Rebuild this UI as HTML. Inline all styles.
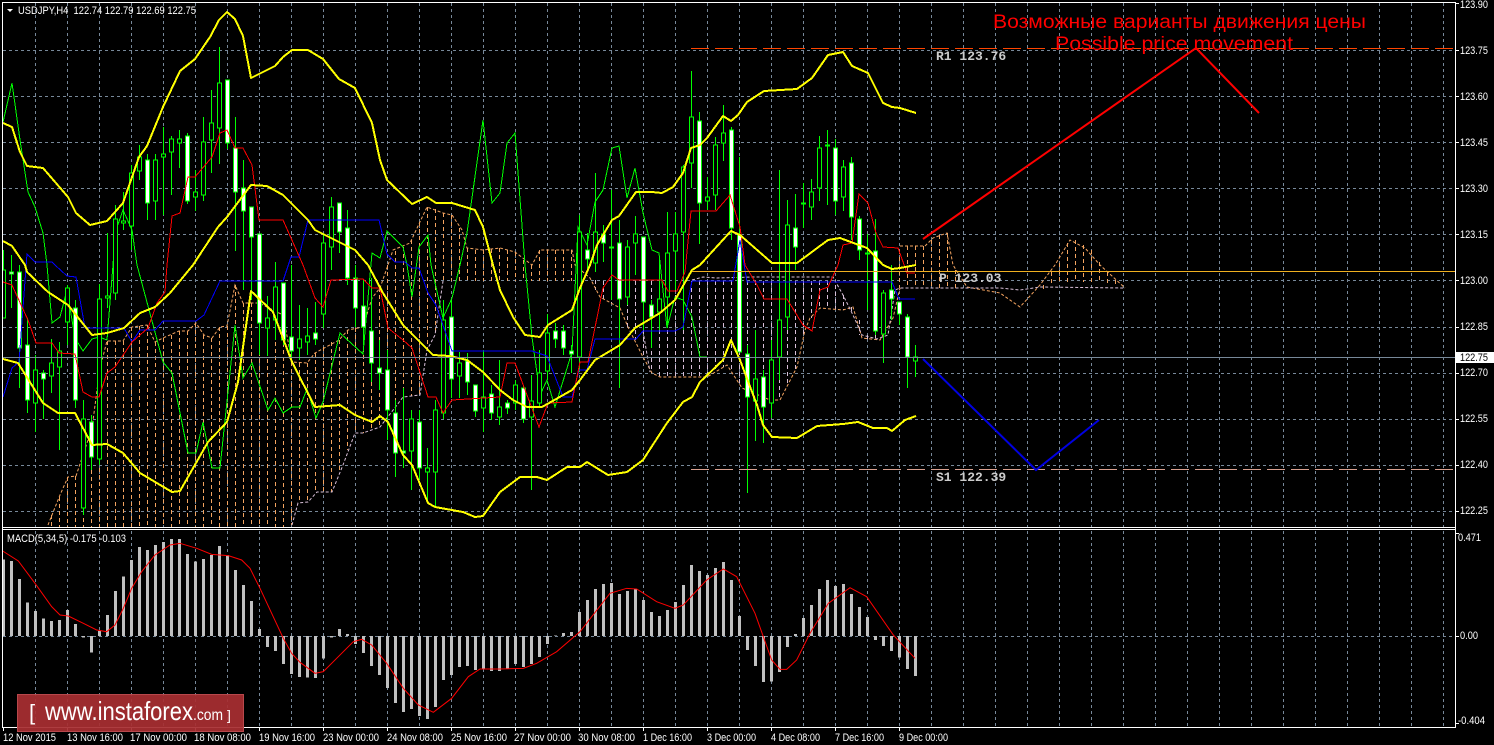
<!DOCTYPE html>
<html lang="en">
<head>
<meta charset="utf-8">
<title>USDJPY,H4</title>
<style>
html,body{margin:0;padding:0;background:#000;width:1494px;height:745px;overflow:hidden}
svg{display:block}
text{font-family:"Liberation Sans",sans-serif}
.ax{fill:#fff;font-size:11px}
.mono{font-family:"Liberation Mono",monospace;font-size:13px;font-weight:bold;fill:#ccc}
</style>
</head>
<body>
<svg width="1494" height="745" viewBox="0 0 1494 745" xmlns="http://www.w3.org/2000/svg">
<rect width="1494" height="745" fill="#000"/>
<defs><clipPath id="m"><rect x="3" y="3" width="1452" height="524"/></clipPath></defs>

<!-- grid -->
<g shape-rendering="crispEdges" fill="none" stroke="#778899" stroke-width="1" stroke-dasharray="3 3">
<path d="M3 50.5H1455M3 96.5H1455M3 142.5H1455M3 188.5H1455M3 234.5H1455M3 280.5H1455M3 327.5H1455M3 373.5H1455M3 419.5H1455M3 465.5H1455M3 511.5H1455M3 636.5H1455"/>
<path d="M35.5 3V727M67.5 3V727M99.5 3V727M131.5 3V727M163.5 3V727M195.5 3V727M227.5 3V727M259.5 3V727M291.5 3V727M323.5 3V727M355.5 3V727M387.5 3V727M419.5 3V727M451.5 3V727M483.5 3V727M515.5 3V727M547.5 3V727M579.5 3V727M611.5 3V727M643.5 3V727M675.5 3V727M707.5 3V727M739.5 3V727M771.5 3V727M803.5 3V727M835.5 3V727M867.5 3V727M899.5 3V727M931.5 3V727M963.5 3V727M995.5 3V727M1027.5 3V727M1059.5 3V727M1091.5 3V727M1123.5 3V727M1155.5 3V727M1187.5 3V727M1219.5 3V727M1251.5 3V727M1283.5 3V727M1315.5 3V727M1347.5 3V727M1379.5 3V727M1411.5 3V727M1443.5 3V727"/>
</g>

<g clip-path="url(#m)">
<!-- ichimoku cloud hatch -->
<g fill="none" stroke-width="1" stroke-dasharray="4 3" shape-rendering="crispEdges">
<path stroke="#f4a460" d="M51.5 515V527M59.5 497V527M67.5 477V527M75.5 476V527M83.5 455V527M91.5 428V527M99.5 370V527M107.5 341V527M115.5 341V527M123.5 341V527M131.5 327V527M139.5 326V527M147.5 325V527M155.5 342V527M163.5 338V527M171.5 335V527M179.5 331V527M187.5 331V527M195.5 323V527M203.5 335V527M211.5 338V527M219.5 327V527M227.5 326V527M235.5 285V527M243.5 303V527M251.5 303V527M259.5 303V527M267.5 310V527M275.5 314V527M283.5 315V527M291.5 362V525M299.5 363V503M307.5 363V502M315.5 353V492M323.5 347V492M331.5 342V492M339.5 340V470M347.5 330V450M355.5 328V433M363.5 327V433M371.5 298V430M379.5 288V427M387.5 265V415M395.5 251V408M403.5 247V397M411.5 240V396M419.5 222V395M427.5 207V350M435.5 209V335M443.5 213V281M451.5 215V281M459.5 228V281M467.5 248V281M475.5 250V281M483.5 250V281M491.5 249V281M499.5 248V281M507.5 250V281M515.5 252V281M523.5 260V281M531.5 265V281M539.5 250V281M547.5 250V281M555.5 250V281M563.5 250V281M571.5 250V281M579.5 265V281"/>
<path stroke="#d8bfd8" d="M595.5 280V290M603.5 281V300M611.5 281V303M619.5 281V308M627.5 281V327M635.5 281V340M643.5 281V357M651.5 281V373M659.5 281V377M667.5 281V377M675.5 281V377M683.5 281V377M691.5 281V377M699.5 281V377M707.5 281V377M715.5 281V372M723.5 281V367M731.5 281V372M739.5 281V385M747.5 281V390M755.5 281V395M763.5 281V400M771.5 281V400M779.5 281V400M787.5 281V385M795.5 281V370M803.5 281V335M811.5 281V318M819.5 281V308M827.5 281V308M835.5 285V309M843.5 295V310M851.5 307V314M859.5 320V335M867.5 335V339M875.5 320V340M883.5 320V340M891.5 305V320"/>
<path stroke="#f4a460" d="M899.5 250V288M907.5 246V288M915.5 246V288M923.5 246V288M931.5 240V288M939.5 235V288M947.5 233V288M955.5 270V288M1043.5 285V290M1051.5 272V285M1059.5 263V282M1067.5 243V282M1075.5 240V282M1083.5 245V282M1091.5 250V283M1099.5 262V283M1107.5 272V284M1115.5 280V286"/>
</g>
<!-- cloud outlines -->
<polyline fill="none" stroke="#f4a460" stroke-dasharray="3 2" points="48,525 60,495 68,477 76,476 83,455 92,428 100,368 107,341 123,341 132,327 147,325 155,342 163,338 179,331 188,331 196,323 204,335 212,338 220,327 227,326 235,285 243,303 259,303 283,315 292,362 307,363 315,353 339,340 348,330 363,327 372,298 380,288 388,265 393,250 410,243 427,207 443,213 452,215 462,230 467,248 483,250 500,248 515,252 532,265 540,250 572,250 575,265 590,278 600,297 620,308 628,327 643,357 652,373 660,377 707,377 727,365 742,388 770,400 780,400 797,367 805,330 810,318 820,308 843,310 853,307 862,338 880,340 893,318 900,288"/>
<polyline fill="none" stroke="#f4a460" stroke-dasharray="3 2" points="900,246 925,246 933,238 947,233 953,265 967,287 1000,293 1020,307 1040,285 1055,265 1070,240 1085,248 1100,265 1125,288"/>
<polyline fill="none" stroke="#d8bfd8" stroke-dasharray="3 2" points="292,525 298,503 308,502 317,492 332,492 343,465 355,433 363,433 380,427 397,405 403,397 420,395 427,350 435,335 443,281"/>
<polyline fill="none" stroke="#d8bfd8" stroke-dasharray="3 2" points="643,331 650,372"/>
<polyline fill="none" stroke="#d8bfd8" stroke-dasharray="3 2" points="692,280 703,277 717,278 753,277 820,277 833,277 843,295 853,315 862,335 877,339 888,335 895,290 900,288 1000,288 1020,290 1040,287 1125,288"/>

<!-- chikou green -->
<polyline fill="none" stroke="#00ff00" shape-rendering="crispEdges" points="3,122 12,83 20,140 28,192 35,207 43,233 47,265 52,323 60,317 67,290 75,338 83,351 92,339 99,337 107,340 113,265 115,233 123,210 132,230 137,265 163,362 172,373 188,453 196,453 203,422 212,468 220,468 235,325 243,378 252,363 268,410 275,398 283,413 292,407 300,407 307,389 316,418 323,402 340,333 363,354 372,253 380,258 387,231 403,247 407,265 412,297 419,247 428,235 431,265 443,318 452,298 460,265 467,233 483,120 492,203 500,193 507,143 515,133 525,265 532,337 540,395 547,380 555,407 572,352 578,227 587,245 595,202 603,190 612,148 619,146 627,198 635,168 643,213 652,250 659,253 667,328 675,297 683,300 692,317 700,357 707,357"/>

<!-- wicks -->
<path fill="none" stroke="#00ff00" shape-rendering="crispEdges" d="M3.5 250V318M11.5 255V308M19.5 265V388M27.5 318V413M35.5 355V432M43.5 370V419M51.5 339V393M59.5 342V450M67.5 285V345M75.5 300V408M83.5 400V515M91.5 415V470M99.5 284V465M107.5 233V308M115.5 205V300M123.5 192V230M131.5 165V250M139.5 145V180M147.5 154V220M155.5 154V220M163.5 127V215M171.5 136V195M179.5 130V168M187.5 133V204M195.5 170V211M203.5 117V201M211.5 90V173M219.5 47V164M227.5 80V149M235.5 117V251M243.5 160V290M251.5 207V300M259.5 234V355M267.5 296V356M275.5 262V340M283.5 283V345M291.5 265V362M299.5 305V360M307.5 308V355M315.5 302V345M323.5 233V328M331.5 197V270M339.5 203V253M347.5 210V285M355.5 265V327M363.5 280V345M371.5 278V382M379.5 340V390M387.5 350V440M395.5 400V477M403.5 388V468M411.5 410V490M419.5 410V480M427.5 448V502M435.5 400V507M443.5 300V419M451.5 300V398M459.5 352V398M467.5 353V395M475.5 385V417M483.5 350V432M491.5 385V420M499.5 360V425M507.5 400V414M515.5 380V410M523.5 386V423M531.5 375V490M539.5 350V408M547.5 314V380M555.5 323V348M563.5 325V355M571.5 345V373M579.5 215V372M587.5 233V270M595.5 173V272M603.5 225V262M611.5 190V300M619.5 220V388M627.5 240V305M635.5 216V275M643.5 237V330M651.5 300V348M659.5 260V330M667.5 212V328M675.5 212V290M683.5 165V330M691.5 71V188M699.5 112V244M707.5 177V210M715.5 137V210M723.5 105V161M731.5 127V240M739.5 157V300M747.5 345V493M755.5 330V441M763.5 370V443M771.5 340V418M779.5 170V380M787.5 200V330M795.5 194V270M803.5 183V228M811.5 179V220M819.5 136V201M827.5 130V205M835.5 139V215M843.5 160V211M851.5 157V240M859.5 216V260M867.5 234V310M875.5 219V335M883.5 290V363M891.5 265V320M899.5 302V325M907.5 314V388M915.5 345V377"/>

<!-- bull bodies -->
<path fill="#000" stroke="#00ff00" shape-rendering="crispEdges" d="M1.5 270h4V318h-4zM33.5 370h4V403h-4zM49.5 363h4V376h-4zM57.5 351h4V367h-4zM65.5 288h4V322h-4zM81.5 419h4V508h-4zM97.5 299h4V459h-4zM105.5 296h4V298h-4zM113.5 219h4V293h-4zM121.5 221h4V223h-4zM129.5 173h4V226h-4zM137.5 157h4V171h-4zM153.5 160h4V201h-4zM161.5 154h4V157h-4zM169.5 139h4V152h-4zM177.5 139h4V143h-4zM193.5 192h4V197h-4zM201.5 142h4V195h-4zM209.5 123h4V140h-4zM217.5 83h4V128h-4zM265.5 318h4V328h-4zM273.5 287h4V320h-4zM297.5 339h4V348h-4zM305.5 336h4V342h-4zM321.5 243h4V314h-4zM329.5 207h4V247h-4zM409.5 419h4V451h-4zM425.5 468h4V472h-4zM433.5 410h4V472h-4zM441.5 320h4V413h-4zM457.5 363h4V376h-4zM481.5 397h4V408h-4zM497.5 407h4V417h-4zM513.5 385h4V403h-4zM529.5 401h4V417h-4zM537.5 373h4V403h-4zM545.5 333h4V371h-4zM577.5 232h4V357h-4zM593.5 232h4V263h-4zM609.5 247h4V248h-4zM625.5 247h4V297h-4zM633.5 234h4V243h-4zM657.5 299h4V312h-4zM665.5 253h4V297h-4zM673.5 234h4V251h-4zM681.5 167h4V232h-4zM689.5 117h4V163h-4zM705.5 197h4V201h-4zM713.5 145h4V195h-4zM721.5 133h4V143h-4zM753.5 379h4V401h-4zM769.5 360h4V403h-4zM777.5 320h4V357h-4zM785.5 225h4V317h-4zM801.5 203h4V204h-4zM809.5 192h4V207h-4zM817.5 148h4V188h-4zM825.5 145h4V146h-4zM841.5 167h4V197h-4zM865.5 253h4V254h-4zM881.5 293h4V334h-4zM913.5 357h4V361h-4z"/>
<!-- bear bodies -->
<path fill="#fff" stroke="#00ff00" shape-rendering="crispEdges" d="M9.5 272h4V274h-4zM17.5 272h4V348h-4zM25.5 345h4V400h-4zM41.5 373h4V379h-4zM73.5 308h4V400h-4zM89.5 422h4V457h-4zM145.5 160h4V203h-4zM185.5 136h4V201h-4zM225.5 80h4V143h-4zM233.5 148h4V192h-4zM241.5 188h4V211h-4zM249.5 207h4V237h-4zM257.5 234h4V323h-4zM281.5 283h4V340h-4zM289.5 337h4V351h-4zM313.5 333h4V339h-4zM337.5 203h4V232h-4zM345.5 228h4V278h-4zM353.5 278h4V308h-4zM361.5 306h4V327h-4zM369.5 331h4V363h-4zM377.5 368h4V373h-4zM385.5 370h4V410h-4zM393.5 413h4V453h-4zM401.5 451h4V453h-4zM417.5 422h4V468h-4zM449.5 317h4V379h-4zM465.5 361h4V382h-4zM473.5 385h4V411h-4zM489.5 394h4V413h-4zM505.5 403h4V408h-4zM521.5 388h4V419h-4zM553.5 331h4V339h-4zM561.5 331h4V348h-4zM569.5 351h4V354h-4zM585.5 250h4V259h-4zM601.5 234h4V243h-4zM617.5 243h4V299h-4zM641.5 237h4V302h-4zM649.5 305h4V317h-4zM697.5 121h4V203h-4zM729.5 130h4V228h-4zM737.5 235h4V352h-4zM745.5 354h4V397h-4zM761.5 377h4V407h-4zM793.5 228h4V247h-4zM833.5 148h4V201h-4zM849.5 163h4V217h-4zM857.5 219h4V250h-4zM873.5 251h4V331h-4zM889.5 290h4V299h-4zM897.5 302h4V314h-4zM905.5 317h4V357h-4z"/>

<!-- blue -->
<polyline fill="none" stroke="#0000ff" shape-rendering="crispEdges" points="3,397 12,368 19,362 27,254 35,262 52,262 55,265 67,276 76,277 85,328 124,328 132,342 140,330 155,330 163,321 196,321 204,315 220,281 283,281 291,257 299,257 308,220 379,220 387,254 395,262 405,262 412,268 419,268 428,293 436,305 452,351 532,351 547,356 563,397 572,397 579,370 587,370 595,339 636,339 643,331 675,331 683,327 692,281 733,281 740,240 747,282 892,282 899,299 915,299"/>
<!-- red tenkan -->
<polyline fill="none" stroke="#ff0000" shape-rendering="crispEdges" points="3,282 12,285 22,307 28,320 36,343 52,343 59,353 75,354 83,392 92,397 99,397 107,373 115,367 132,342 148,328 157,303 165,292 167,265 172,216 180,213 188,177 195,177 212,157 220,133 227,130 235,148 243,148 252,165 259,220 283,220 303,265 315,298 323,307 331,280 363,279 372,288 380,288 388,328 403,340 412,348 428,397 436,397 443,413 452,400 500,397 507,363 515,363 539,427 548,403 572,402 580,362 588,362 603,288 612,275 619,280 662,280 668,291 677,291 685,272 691,211 716,211 730,195 740,227 745,265 757,285 764,299 787,299 803,325 812,331 820,290 828,287 838,265 843,245 852,243 859,194 868,203 876,233 883,247 898,248 907,273 915,273"/>
<!-- bollinger yellow -->
<g fill="none" stroke="#ffff00" stroke-width="2" shape-rendering="crispEdges" stroke-linejoin="round">
<polyline points="3,123 12,127 20,152 27,166 43,168 68,197 76,213 90,225 107,221 123,203 139,157 147,146 163,107 180,71 195,59 210,37 219,20 227,12 235,19 243,36 251,78 275,66 283,57 292,50 308,50 323,59 339,79 355,88 372,123 380,160 387,180 412,204 427,197 436,203 452,203 475,210 483,227 493,265 500,290 513,317 525,335 540,337 548,325 572,310 580,288 590,265 597,245 612,220 619,216 636,192 652,192 662,193 673,187 683,173 691,148 700,145 707,138 723,116 731,121 738,115 747,102 764,91 797,89 812,78 828,55 843,52 852,66 868,73 883,103 892,107 900,108 916,113"/>
<polyline points="3,241 12,246 25,265 27,272 48,292 68,305 92,335 107,333 124,328 140,313 155,307 170,293 193,265 218,227 227,217 251,185 267,186 283,195 308,220 315,230 345,245 355,250 368,265 383,293 403,325 433,355 450,356 467,360 483,372 500,390 513,400 527,407 542,407 572,390 580,380 595,360 620,345 635,328 660,313 675,300 692,270 700,265 731,231 740,235 772,263 797,263 828,240 840,238 867,248 883,265 892,269 900,268 916,265"/>
<polyline points="3,359 18,363 43,403 58,413 75,413 92,445 107,444 123,453 140,473 172,492 180,491 208,442 227,422 238,382 251,291 273,312 292,362 315,407 340,405 355,415 372,422 380,416 388,422 403,455 412,465 428,503 435,507 463,512 475,517 483,516 500,492 520,477 537,477 547,480 567,467 580,467 587,462 608,475 627,472 643,460 667,423 683,402 692,397 700,382 723,360 731,340 740,360 757,405 763,425 772,437 797,438 817,426 843,424 858,422 873,428 887,428 892,431 905,420 916,416"/>
</g>

<!-- pivots & price -->
<g shape-rendering="crispEdges" fill="none">
<path stroke="#778899" d="M3 357.5H1455"/>
<path stroke="#f0b020" d="M692 271.5H1455"/>
<path stroke="#ff4500" stroke-dasharray="18 6" d="M691 48.5H1455"/>
<path stroke="#d8a090" stroke-dasharray="18 6" d="M691 469.5H1455"/>
</g>

<!-- drawn forecast lines -->
<polyline fill="none" stroke="#ff0000" stroke-width="2" points="923,239 1196,48 1259,113"/>
<polyline fill="none" stroke="#0000e0" stroke-width="2" points="923,359 1036,470 1099,420"/>
</g>

<!-- macd histogram -->
<path transform="translate(3.5 525) scale(1 .33333)" fill="none" stroke="#c0c0c0" stroke-width="3" shape-rendering="crispEdges" d="M0 333V103M8 333V108M16 333V162M24 333V232M32 333V258M40 333V280M48 333V288M56 333V285M64 333V255M72 333V297M80 333V338M88 333V383M96 333V318M104 333V270M112 333V198M120 333V155M128 333V105M136 333V66M144 333V75M152 333V60M160 333V51M168 333V42M176 333V42M184 333V87M192 333V110M200 333V102M208 333V90M216 333V63M224 333V90M232 333V135M240 333V180M248 333V228M256 333V312M264 333V366M272 333V378M280 333V417M288 333V447M296 333V456M304 333V458M312 333V459M320 333V400M328 333V338M336 333V312M344 333V327M352 333V357M360 333V384M368 333V423M376 333V450M384 333V489M392 333V534M400 333V561M408 333V552M416 333V573M424 333V582M432 333V546M440 333V465M448 333V450M456 333V426M464 333V423M472 333V435M480 333V432M488 333V438M496 333V438M504 333V432M512 333V417M520 333V426M528 333V417M536 333V396M544 333V357M552 333V331M560 333V324M568 333V321M576 333V261M584 333V225M592 333V192M600 333V177M608 333V174M616 333V207M624 333V198M632 333V192M640 333V225M648 333V261M656 333V273M664 333V255M672 333V231M680 333V180M688 333V120M696 333V138M704 333V150M712 333V129M720 333V111M728 333V165M736 333V273M744 333V375M752 333V423M760 333V471M768 333V469M776 333V441M784 333V366M792 333V327M800 333V279M808 333V240M816 333V192M824 333V165M832 333V183M840 333V177M848 333V207M856 333V246M864 333V276M872 333V345M880 333V363M888 333V378M896 333V397M904 333V432M912 333V453"/>
<!-- macd signal -->
<polyline transform="translate(0 525) scale(.33333)" fill="none" stroke="#ff0000" stroke-width="3" points="8,78 55,108 105,175 155,245 180,270 205,273 250,295 290,315 320,320 345,300 370,250 395,190 425,140 465,90 510,60 540,55 590,70 635,88 685,92 725,105 750,130 780,190 850,340 875,385 900,412 945,445 970,440 1010,400 1060,350 1085,343 1115,360 1160,415 1210,490 1255,540 1300,562 1355,520 1405,455 1440,432 1500,432 1570,430 1610,415 1670,380 1740,320 1830,205 1880,190 1910,192 1970,230 2025,250 2050,240 2120,165 2170,132 2210,155 2265,265 2315,405 2340,433 2360,433 2390,405 2430,325 2485,235 2550,188 2600,215 2680,330 2745,400"/>

<!-- window borders -->
<g shape-rendering="crispEdges" fill="none" stroke="#fff">
<path d="M2.5 2.5H1455.5V727.5H2.5ZM2.5 527.5H1455.5M2.5 529.5H1455.5"/>
<path d="M1455 50.5h4M1455 96.5h4M1455 142.5h4M1455 188.5h4M1455 234.5h4M1455 280.5h4M1455 327.5h4M1455 373.5h4M1455 419.5h4M1455 465.5h4M1455 511.5h4M1455 3.5h4M1455 533.5h4M1455 636.5h4M1455 723.5h4"/>
<path d="M3.5 727v4M67.5 727v4M131.5 727v4M195.5 727v4M259.5 727v4M323.5 727v4M387.5 727v4M451.5 727v4M515.5 727v4M579.5 727v4M643.5 727v4M707.5 727v4M771.5 727v4M835.5 727v4M899.5 727v4"/>
</g>

<!-- price axis -->
<rect x="1456" y="352" width="38" height="11" fill="#fff"/>
<g class="ax">
<text x="1460" y="8" class="ax" textLength="28" lengthAdjust="spacingAndGlyphs">123.90</text>
<text x="1460" y="54" class="ax" textLength="28" lengthAdjust="spacingAndGlyphs">123.75</text>
<text x="1460" y="100" class="ax" textLength="28" lengthAdjust="spacingAndGlyphs">123.60</text>
<text x="1460" y="146" class="ax" textLength="28" lengthAdjust="spacingAndGlyphs">123.45</text>
<text x="1460" y="192" class="ax" textLength="28" lengthAdjust="spacingAndGlyphs">123.30</text>
<text x="1460" y="238" class="ax" textLength="28" lengthAdjust="spacingAndGlyphs">123.15</text>
<text x="1460" y="284" class="ax" textLength="28" lengthAdjust="spacingAndGlyphs">123.00</text>
<text x="1460" y="330" class="ax" textLength="28" lengthAdjust="spacingAndGlyphs">122.85</text>
<text x="1460" y="361" style="fill:#000;font-size:11px" textLength="28" lengthAdjust="spacingAndGlyphs">122.75</text>
<text x="1460" y="376" class="ax" textLength="28" lengthAdjust="spacingAndGlyphs">122.70</text>
<text x="1460" y="422" class="ax" textLength="28" lengthAdjust="spacingAndGlyphs">122.55</text>
<text x="1460" y="468" class="ax" textLength="28" lengthAdjust="spacingAndGlyphs">122.40</text>
<text x="1460" y="514" class="ax" textLength="28" lengthAdjust="spacingAndGlyphs">122.25</text>
<text x="1458" y="541" class="ax" textLength="23" lengthAdjust="spacingAndGlyphs">0.471</text>
<text x="1460" y="639" class="ax" textLength="18" lengthAdjust="spacingAndGlyphs">0.00</text>
<text x="1458" y="724" class="ax" textLength="27" lengthAdjust="spacingAndGlyphs">-0.404</text>
</g>

<!-- date axis -->
<g>
<text x="3" y="741" class="ax" textLength="53" lengthAdjust="spacingAndGlyphs">12 Nov 2015</text>
<text x="67" y="741" class="ax" textLength="56" lengthAdjust="spacingAndGlyphs">13 Nov 16:00</text>
<text x="130" y="741" class="ax" textLength="57" lengthAdjust="spacingAndGlyphs">17 Nov 00:00</text>
<text x="194" y="741" class="ax" textLength="57" lengthAdjust="spacingAndGlyphs">18 Nov 08:00</text>
<text x="259" y="741" class="ax" textLength="56" lengthAdjust="spacingAndGlyphs">19 Nov 16:00</text>
<text x="323" y="741" class="ax" textLength="56" lengthAdjust="spacingAndGlyphs">23 Nov 00:00</text>
<text x="387" y="741" class="ax" textLength="56" lengthAdjust="spacingAndGlyphs">24 Nov 08:00</text>
<text x="451" y="741" class="ax" textLength="56" lengthAdjust="spacingAndGlyphs">25 Nov 16:00</text>
<text x="514" y="741" class="ax" textLength="57" lengthAdjust="spacingAndGlyphs">27 Nov 00:00</text>
<text x="578" y="741" class="ax" textLength="57" lengthAdjust="spacingAndGlyphs">30 Nov 08:00</text>
<text x="643" y="741" class="ax" textLength="49" lengthAdjust="spacingAndGlyphs">1 Dec 16:00</text>
<text x="707" y="741" class="ax" textLength="49" lengthAdjust="spacingAndGlyphs">3 Dec 00:00</text>
<text x="771" y="741" class="ax" textLength="49" lengthAdjust="spacingAndGlyphs">4 Dec 08:00</text>
<text x="835" y="741" class="ax" textLength="49" lengthAdjust="spacingAndGlyphs">7 Dec 16:00</text>
<text x="899" y="741" class="ax" textLength="49" lengthAdjust="spacingAndGlyphs">9 Dec 00:00</text>
</g>

<!-- chart labels -->
<path d="M7 9h6l-3 3z" fill="#fff"/>
<text x="18" y="14" class="ax" textLength="178" lengthAdjust="spacingAndGlyphs" xml:space="preserve">USDJPY,H4  122.74 122.79 122.69 122.75</text>
<text x="7" y="542" class="ax" textLength="119" lengthAdjust="spacingAndGlyphs">MACD(5,34,5) -0.175 -0.103</text>
<text x="936" y="60" class="mono">R1 123.76</text>
<text x="939" y="282" class="mono">P 123.03</text>
<text x="936" y="481" class="mono">S1 122.39</text>
<text x="993" y="28" fill="#ff0000" font-size="19" textLength="373" lengthAdjust="spacingAndGlyphs">Возможные варианты движения цены</text>
<text x="1055" y="50" fill="#ff0000" font-size="19" textLength="238" lengthAdjust="spacingAndGlyphs">Possible price movement</text>

<!-- instaforex badge -->
<rect x="17.5" y="694.5" width="226" height="37" fill="#a82e32" fill-opacity=".93" stroke="#b8484c"/>
<text x="29" y="720" fill="#fff" font-size="22">[</text>
<text x="45" y="720" fill="#fff" font-size="26" textLength="148" lengthAdjust="spacingAndGlyphs">www.instaforex</text>
<text x="193" y="720" fill="#fff" font-size="16" textLength="30" lengthAdjust="spacingAndGlyphs">.com</text>
<text x="227" y="720" fill="#fff" font-size="14">]</text>
</svg>
</body>
</html>
